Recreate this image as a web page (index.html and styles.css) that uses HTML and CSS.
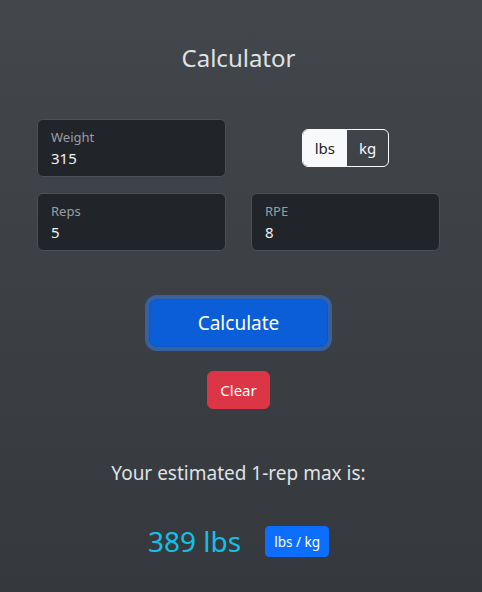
FILE: index.html
```html
<!DOCTYPE html>
<html lang="en">
<head>
<meta charset="utf-8">
<title>Calculator</title>
<link rel="stylesheet" href="styles.css">
</head>
<body>
<main class="page">
  <h1 class="title">Calculator</h1>
  <div class="grid">
    <div class="field">
      <span class="field-label">Weight</span>
      <span class="field-value">315</span>
    </div>
    <div class="unit-cell">
      <div class="toggle">
        <span class="toggle-btn active">lbs</span>
        <span class="toggle-btn">kg</span>
      </div>
    </div>
    <div class="field">
      <span class="field-label">Reps</span>
      <span class="field-value">5</span>
    </div>
    <div class="field">
      <span class="field-label">RPE</span>
      <span class="field-value">8</span>
    </div>
  </div>
  <button class="btn-calc" type="button">Calculate</button>
  <button class="btn-clear" type="button">Clear</button>
  <p class="result-label">Your estimated 1-rep max is:</p>
  <div class="result-row">
    <span class="result-value">389 lbs</span>
    <button class="btn-unit" type="button">lbs / kg</button>
  </div>
</main>
</body>
</html>
```
FILE: styles.css
```css
html, body {
  margin: 0;
  height: 100%;
}
body {
  background: linear-gradient(180deg, #43464a 0%, #35383c 100%);
  font-family: "Noto Sans", "Open Sans", sans-serif;
  color: #dee2e6;
}
.page {
  width: 403px;
  margin-left: 37px;
  padding-top: 43px;
  display: flex;
  flex-direction: column;
  align-items: center;
}
.title {
  margin: 0;
  font-size: 24px;
  font-weight: 400;
  line-height: 29px;
  color: #dee2e6;
}
.grid {
  margin-top: 47px;
  width: 100%;
  display: grid;
  grid-template-columns: 1fr 1fr;
  column-gap: 25px;
  row-gap: 16px;
}
.field {
  box-sizing: border-box;
  height: 58px;
  background: #212529;
  border: 1px solid #495057;
  border-radius: 6px;
  padding: 8px 13px 0;
  display: flex;
  flex-direction: column;
}
.field-label {
  font-size: 13px;
  line-height: 19px;
  color: rgba(222, 226, 230, 0.65);
}
.field-value {
  font-size: 15px;
  line-height: 22px;
  color: #f1f3f5;
}
.unit-cell {
  display: flex;
  align-items: center;
  justify-content: center;
}
.toggle {
  display: flex;
  border: 1px solid #f8f9fa;
  border-radius: 6px;
  overflow: hidden;
}
.toggle-btn {
  font-size: 15px;
  line-height: 36px;
  padding: 0 12px;
  color: #f8f9fa;
}
.toggle-btn.active {
  background: #f8f9fa;
  color: #212529;
}
.btn-calc {
  margin-top: 48px;
  box-sizing: border-box;
  height: 48px;
  padding: 0 48px;
  font-family: inherit;
  font-size: 19px;
  color: #fff;
  background: #0b5ed7;
  border: 1px solid #0a58ca;
  border-radius: 8px;
  box-shadow: 0 0 0 4px rgba(49, 132, 253, 0.5);
}
.btn-clear {
  margin-top: 24px;
  box-sizing: border-box;
  height: 38px;
  padding: 0 12px;
  font-family: inherit;
  font-size: 15px;
  color: #fff;
  background: #dc3545;
  border: 1px solid #dc3545;
  border-radius: 6px;
}
.result-label {
  margin: 52px 0 0;
  font-size: 19px;
  line-height: 24px;
  color: #dee2e6;
}
.result-row {
  margin-top: 39px;
  display: flex;
  align-items: center;
  gap: 24px;
}
.result-value {
  font-size: 28px;
  line-height: 35px;
  color: #13c0e6;
}
.btn-unit {
  box-sizing: border-box;
  height: 31px;
  padding: 0 8px;
  font-family: inherit;
  font-size: 13.5px;
  color: #fff;
  background: #0d6efd;
  border: 1px solid #0d6efd;
  border-radius: 4px;
}
```
